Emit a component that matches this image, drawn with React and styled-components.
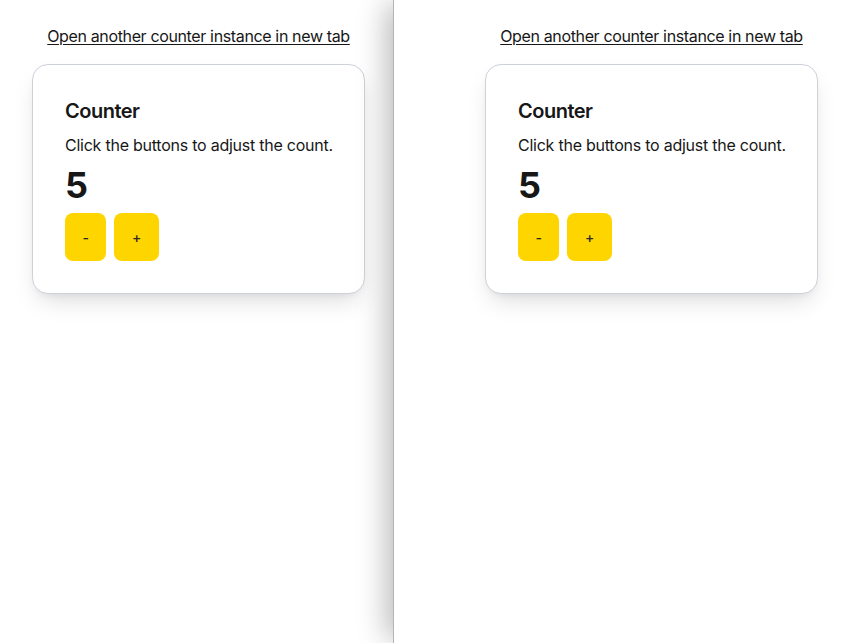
import React, { useState } from 'react';
import styled, { createGlobalStyle } from 'styled-components';

const GlobalStyle = createGlobalStyle`
  html, body {
    margin: 0;
    padding: 0;
    background: #ffffff;
    font-family: Inter, "Noto Sans", sans-serif;
    color: #171717;
  }
`

const Screen = styled.div`
  display: flex;
  flex-direction: row;
  min-height: 100vh;
  width: 100%;
  overflow: hidden;
`

const Pane = styled.div`
  background: #ffffff;
  box-sizing: border-box;
  padding: 24px 0 0 ${props => props.$inset}px;
  width: ${props => props.$width ? `${props.$width}px` : 'auto'};
  flex: ${props => props.$width ? '0 0 auto' : '1 1 auto'};
  border-left: ${props => props.$front ? '1px solid #b4b4b4' : 'none'};
  box-shadow: ${props => props.$front ? '-10px 0 28px -4px rgba(0,0,0,0.28)' : 'none'};
`

const Column = styled.div`
  width: 333px;
  display: flex;
  flex-direction: column;
  gap: 16px;
`

const TabLink = styled.a`
  display: block;
  text-align: center;
  font-size: 16px;
  line-height: 24px;
  letter-spacing: -0.36px;
  color: #171717;
  text-decoration: underline;
  text-underline-offset: 2px;
  cursor: pointer;
`

const Card = styled.div`
  box-sizing: border-box;
  border: 1px solid #cdd1da;
  border-radius: 16px;
  background: #ffffff;
  padding: 32px;
  display: flex;
  flex-direction: column;
  gap: 8px;
  box-shadow: 0 12px 24px -6px rgba(0,0,0,0.14), 0 4px 8px -4px rgba(0,0,0,0.08);
`

const Title = styled.h2`
  margin: 0;
  font-size: 20px;
  line-height: 28px;
  font-weight: 600;
  letter-spacing: -0.5px;
`

const Hint = styled.p`
  margin: 0;
  font-size: 16px;
  line-height: 24px;
  letter-spacing: -0.24px;
  white-space: nowrap;
`

const Count = styled.div`
  font-size: 36px;
  line-height: 40px;
  font-weight: 700;
`

const Buttons = styled.div`
  display: flex;
  gap: 8px;
`

const StepButton = styled.button`
  height: 48px;
  padding: 0 17.5px;
  border: none;
  border-radius: 8px;
  background: #ffd500;
  color: #2a2a2a;
  font-family: Inter, "Noto Sans", sans-serif;
  font-size: 14px;
  font-weight: 500;
  cursor: pointer;
`

function Counter() {
  const [count, setCount] = useState(5);
  return (
    <Column>
      <TabLink>Open another counter instance in new tab</TabLink>
      <Card>
        <Title>Counter</Title>
        <Hint>Click the buttons to adjust the count.</Hint>
        <Count>{count}</Count>
        <Buttons>
          <StepButton onClick={() => setCount(count - 1)}>-</StepButton>
          <StepButton onClick={() => setCount(count + 1)}>+</StepButton>
        </Buttons>
      </Card>
    </Column>
  );
}

export default function App() {
  return (
    <>
      <GlobalStyle />
      <Screen>
        <Pane $width={393} $inset={32}>
          <Counter />
        </Pane>
        <Pane $front $inset={91}>
          <Counter />
        </Pane>
      </Screen>
    </>
  );
}
